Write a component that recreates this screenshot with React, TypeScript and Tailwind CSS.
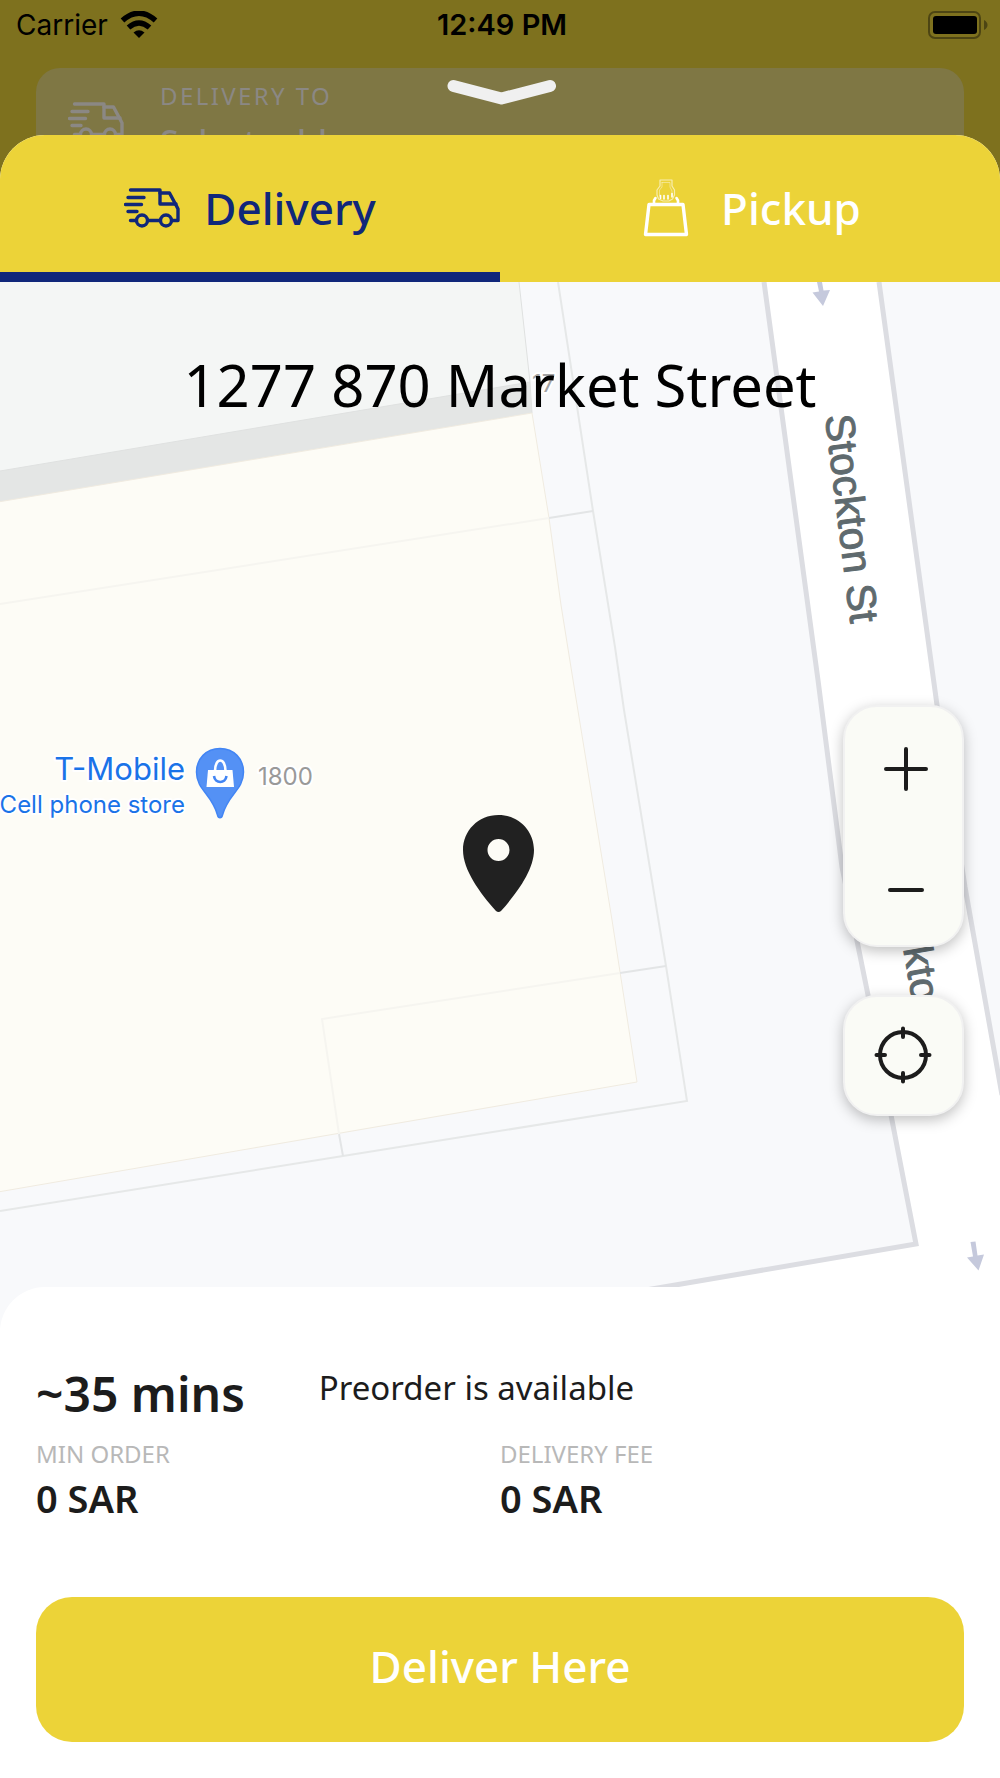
import { useState } from "react"

const TruckIcon = ({ className }: { className: string }) => (
  <svg viewBox="0 0 56 40" className={className} fill="none" stroke="currentColor" strokeWidth="3.400" strokeLinecap="round" strokeLinejoin="round">
    <path d="M6.500 2H36V16H52" />
    <path d="M36 5H45.500L52.500 18L54 21V32.500H48" />
    <path d="M4 9.500H20M1.500 16.500H17.500M4 23.500H13M6.500 32.500H12M24 32.500H36" />
    <circle cx="18" cy="32.500" r="5.500" />
    <circle cx="42" cy="32.500" r="5.500" />
  </svg>
)

const BagIcon = ({ className }: { className: string }) => (
  <svg viewBox="-4 0 50 58" className={className} fill="none" stroke="currentColor" strokeLinecap="round" strokeLinejoin="round">
    <path d="M6 25.500H40L43.500 55.500H2.500Z" strokeWidth="3.400" />
    <path d="M11 24V21.500L12.500 19M35 24V21.500L33.500 19" strokeWidth="2.600" />
    <path d="M17 1H29V7L31.500 11V16L29.500 20L26 22H20L15.500 20L14 16V11L17 7Z" strokeWidth="1.200" opacity=".6" />
    <path d="M19 3.500H27V8L29 12V17M19 3.500V8L16.500 11V17" strokeWidth="1" opacity=".4" />
    <path d="M17.500 16.500V19.500M21 16.500V20M25 16.500V20M29 14.500V18" strokeWidth="1.600" />
  </svg>
)

const StreetMap = () => (
  <svg viewBox="0 282 1000 1050" preserveAspectRatio="xMidYMin slice" className="absolute inset-0 w-full h-full">
    <rect y="282" width="1000" height="1050" fill="#f8f9fb" />

    {/* buildings */}
    <path d="M0 282H519L530 382L0 471Z" fill="#f4f6f5" />
    <path d="M0 471L530 382L532 413L0 502Z" fill="#e4e6e5" />
    <path d="M519 282L530 382L532 413M0 471L530 382" fill="none" stroke="#dfe1e0" strokeWidth="1" />
    <path d="M-2 502L532 413L549 518L561 605L573 680L612 920L637 1082L-2 1192Z" fill="#fdfcf6" stroke="#f0ebe0" strokeWidth="1" />

    {/* parcel lines */}
    <g fill="none" strokeWidth="2">
      <path d="M558 282L593 511L615 647L624 710L666 966L687 1101L343 1156L0 1211" stroke="#e6e8e8" />
      <path d="M549 518L593 511M620 973L666 966M339 1134L343 1156" stroke="#e3e5e6" />
      <path d="M0 604L549 518M620 973L322 1019L339 1134" stroke="#f6f5f0" />
    </g>

    {/* Stockton St */}
    <path d="M764 282L818 680L842 867L868 995L891 1115L916 1244L640 1291V1332H1000V1090L965 887L937 705L879 282Z" fill="#fff" />
    <path d="M764 282L818 680L842 867L868 995L891 1115L916 1244L640 1291M879 282L937 705L965 887L1002 1095" fill="none" stroke="#dcdde2" strokeWidth="5" />
    <g fill="#c5c9dc">
      <path d="M817 282H822L823.500 290.500L830 290L823 306L812.500 292.500L819 291.500Z" />
      <path d="M970.500 1242L975.500 1241.500L977.500 1255.500L984 1254.500L978.500 1270.500L967 1257.500L973 1256.500Z" />
    </g>
    <g fill="#5f6a6e" stroke="#5f6a6e" strokeWidth="1" fontSize="41" className="font-['Liberation_Sans',sans-serif]">
      <text transform="translate(825 416) rotate(83)">Stockton St</text>
      <text transform="translate(889 868) rotate(80)">Stockton St</text>
    </g>

    {/* places */}
    <g className="font-['Inter',sans-serif]" stroke="#fff" strokeWidth="4" paintOrder="stroke" strokeLinejoin="round">
      <text x="532" y="392" fontSize="24" fill="#a3a3a3">17</text>
      <text x="258" y="785" fontSize="24" fill="#999">1800</text>
      <g fill="#1a73e8" textAnchor="end">
        <text x="185" y="780" fontSize="31">T-Mobile</text>
        <text x="185" y="813" fontSize="24">Cell phone store</text>
      </g>
    </g>
    <path d="M220 748.500C206 748.500 196.500 759 196.500 772C196.500 790 212 794 217.500 815C218.300 818.500 221.700 818.500 222.500 815C228 794 243.500 790 243.500 772C243.500 759 234 748.500 220 748.500Z" fill="#5491f5" stroke="#4285f4" strokeWidth="1.500" />
    <path d="M208 770H232.500L234 787H206.500Z" fill="#fff" />
    <path d="M215 771C215 757 225.500 757 225.500 771" fill="none" stroke="#fff" strokeWidth="2.600" />
    <path d="M214 776C215 784 225.500 784 226.500 776" fill="none" stroke="#4285f4" strokeWidth="2.600" />

    {/* chosen address */}
    <path fillRule="evenodd" d="M498.500 815C478 815 463 831 463 850C463 870 480 893 496 911Q498.500 913 501 911C517 893 534 870 534 850C534 831 519 815 498.500 815ZM498.500 839A11 11 0 1 1 498.500 861A11 11 0 1 1 498.500 839Z" fill="#212121" />
  </svg>
)

const StatusBar = () => (
  <div className="grid grid-cols-3 items-center h-[50px] pl-4 pr-3 font-['Inter',sans-serif] text-[28px] leading-8 text-black">
    <div className="flex items-center gap-3">
      <span>Carrier</span>
      <svg viewBox="0 0 38 28" className="w-[38px] h-7">
        <path d="M2.500 9.500Q19 -5 35.500 9.500" fill="none" stroke="#000" strokeWidth="5.500" />
        <path d="M8.500 16.500Q19 7.500 29.500 16.500" fill="none" stroke="#000" strokeWidth="5.500" />
        <path d="M13.500 21.500Q19 17 24.500 21.500L19 27Z" />
      </svg>
    </div>
    <span className="text-center text-[29px] font-semibold">12:49 PM</span>
    <svg viewBox="0 0 60 28" className="w-[60px] h-7 justify-self-end">
      <rect x="1" y="1" width="51" height="26" rx="6" fill="none" stroke="#4d4513" strokeWidth="2" />
      <rect x="5" y="5" width="44" height="18" rx="3" />
      <path d="M56 9Q59.500 11 59.500 14T56 19Z" fill="#4d4513" />
    </svg>
  </div>
)

const tabs = [
  { id: "delivery", label: "Delivery", icon: <TruckIcon className="w-14 h-10" /> },
  { id: "pickup", label: "Pickup", icon: <BagIcon className="w-[50px] h-[58px]" /> },
]

export default function App() {
  const [tab, setTab] = useState("delivery")

  return (
    <div className="flex flex-col min-h-screen bg-[#7e711e] font-['Noto_Sans',sans-serif] text-[#1c1c1c]">
      <header className="relative h-[135px] overflow-hidden">
        <StatusBar />
        <div className="flex gap-9 mx-9 mt-[18px] pl-8 pt-3 rounded-t-3xl bg-[#7f7744] text-[#8b8884]">
          <TruckIcon className="w-14 h-10 mt-[22px]" />
          <div>
            <p className="text-2xl leading-8 tracking-widest">DELIVERY TO</p>
            <p className="text-[34px] leading-[60px] font-medium">Select address</p>
          </div>
        </div>
        <button aria-label="Close" className="absolute left-1/2 top-[78px] -translate-x-1/2">
          <svg viewBox="0 0 112 28" className="w-28 h-7" fill="none" stroke="#f0f0f0" strokeWidth="12" strokeLinecap="round" strokeLinejoin="round">
            <path d="M9.500 8L57.500 20.500L106 8" />
          </svg>
        </button>
      </header>

      <main className="flex flex-col flex-1 rounded-t-[45px] overflow-hidden bg-white">
        <div className="grid grid-cols-2 bg-[#ecd338]">
          {tabs.map((t) => (
            <button
              key={t.id}
              onClick={() => setTab(t.id)}
              className={`flex items-center justify-center h-[147px] pt-2 border-b-[10px] text-[44px] leading-[60px] font-medium ${t.id === "delivery" ? "gap-6" : "gap-8"} ${tab === t.id ? "border-[#10277a] text-[#10277a]" : "border-transparent text-white"}`}
            >
              {t.icon}
              <span>{t.label}</span>
            </button>
          ))}
        </div>

        <section className="relative flex-1 min-h-[900px]">
          <StreetMap />
          <h1 className="relative pt-[63px] text-center text-[58px] leading-[80px] text-black">1277 870 Market Street</h1>
          <div className="absolute right-9 top-[423px] flex flex-col gap-12">
            <div className="flex flex-col w-[121px] rounded-[34px] border-2 border-[#f1f1f1] bg-[#fafbf6] shadow-[0_4px_14px_rgba(0,0,0,0.25)]">
              <button aria-label="Zoom in" className="flex items-center justify-center h-[119px] pt-1 pl-1">
                <svg viewBox="0 0 44 44" className="size-11" stroke="#1c1c1c" strokeWidth="4" strokeLinecap="round">
                  <path d="M2 22H42M22 2V42" />
                </svg>
              </button>
              <button aria-label="Zoom out" className="flex items-center justify-center h-[119px] pt-2 pl-1">
                <svg viewBox="0 0 44 44" className="size-11" stroke="#1c1c1c" strokeWidth="4" strokeLinecap="round">
                  <path d="M6 22H38" />
                </svg>
              </button>
            </div>
            <button aria-label="My location" className="flex items-center justify-center size-[121px] pr-0.5 pb-0.5 rounded-[34px] border-2 border-[#f1f1f1] bg-[#fafbf6] shadow-[0_4px_14px_rgba(0,0,0,0.25)]">
              <svg viewBox="0 0 58 58" className="w-[58px] h-[58px]" fill="none" stroke="#1c1c1c" strokeWidth="4" strokeLinecap="round">
                <circle cx="29" cy="29" r="23" />
                <path d="M29 2.500V11M29 47V55.500M2.500 29H11M47 29H55.500" />
              </svg>
            </button>
          </div>
        </section>

        <section className="relative -mt-[45px] rounded-t-[45px] bg-white px-9 pt-[77px] pb-9">
          <div className="flex gap-[74px]">
            <p className="text-[48px] leading-[60px] font-semibold">~35 mins</p>
            <p className="text-[33px] leading-[48px]">Preorder is available</p>
          </div>
          <dl className="grid grid-cols-2 mt-3">
            <div>
              <dt className="text-2xl leading-9 text-[#b8b8b8]">MIN ORDER</dt>
              <dd className="text-[38px] leading-[52px] font-semibold">0 SAR</dd>
            </div>
            <div>
              <dt className="text-2xl leading-9 text-[#b8b8b8]">DELIVERY FEE</dt>
              <dd className="text-[38px] leading-[52px] font-semibold">0 SAR</dd>
            </div>
          </dl>
          <button className="w-full h-[145px] mt-[73px] pb-2 rounded-[36px] bg-[#ecd338] text-[44px] leading-[60px] font-medium text-white">Deliver Here</button>
        </section>
      </main>
    </div>
  )
}
